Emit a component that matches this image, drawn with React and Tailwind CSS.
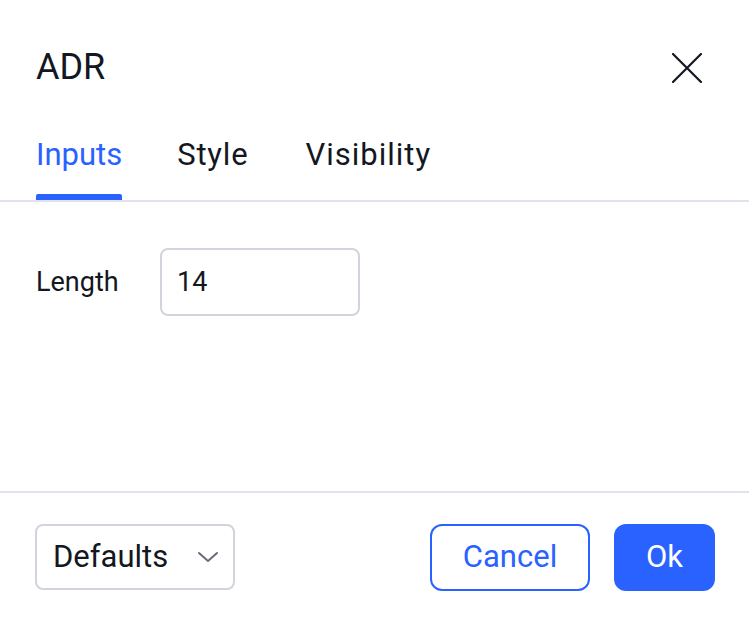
import React from "react";

export default function App() {
  return (
    <div
      className="w-[749px] h-[620px] bg-white text-[#131722] flex flex-col"
      style={{ fontFamily: "Roboto, 'Noto Sans', sans-serif" }}
    >
      <div className="flex items-center justify-between pl-9 pr-[47px] pt-[46px] h-[89px]">
        <h1 className="text-[36px] leading-[43px]">ADR</h1>
        <button className="w-[30px] h-[30px] text-[#131722]">
          <svg viewBox="0 0 30 30" width="30" height="30" fill="none" stroke="currentColor" strokeWidth="2.2" strokeLinecap="round">
            <path d="M1 1 L29 29 M29 1 L1 29" />
          </svg>
        </button>
      </div>

      <div className="flex pl-9 pt-[47px] border-b-2 border-[#e0e3eb]">
        <Tab label="Inputs" active className="mr-[55px]" />
        <Tab label="Style" className="mr-[57px] tracking-[0.8px]" />
        <Tab label="Visibility" className="tracking-[1px]" />
      </div>

      <div className="flex-1 flex flex-col px-9 pt-[46px]">
        <div className="flex items-center">
          <span className="w-[124px] text-[27px]">Length</span>
          <div className="w-[200px] h-[68px] border-2 border-[#d1d4dc] rounded-[8px] flex items-center px-[15px] text-[27px]">
            14
          </div>
        </div>
      </div>

      <div className="border-t-2 border-[#e0e3eb] h-[129px] flex items-start justify-between pl-[35px] pr-[34px] pt-[31px]">
        <div className="w-[200px] h-[66px] border-2 border-[#d1d4dc] rounded-[8px] flex items-center justify-between pl-[16px] pr-[14px]">
          <span className="text-[31px]">Defaults</span>
          <svg viewBox="0 0 22 12" width="22" height="12" fill="none" stroke="#6a6d78" strokeWidth="2" strokeLinecap="round" strokeLinejoin="round">
            <path d="M2 2 L11 10 L20 2" />
          </svg>
        </div>
        <div className="flex gap-[24px]">
          <button className="w-[160px] h-[67px] border-2 border-[#2962ff] rounded-[12px] text-[#2962ff] text-[31px]">
            Cancel
          </button>
          <button className="w-[101px] h-[67px] bg-[#2962ff] rounded-[12px] text-white text-[31px]">
            Ok
          </button>
        </div>
      </div>
    </div>
  );
}

function Tab({ label, active, className = "" }) {
  return (
    <div className={"flex flex-col " + className}>
      <span className={"text-[31px] leading-[37px] " + (active ? "text-[#2962ff]" : "text-[#131722]")}>
        {label}
      </span>
      <div className={"h-[6px] mt-[21px] rounded-t-[2px] " + (active ? "bg-[#2962ff]" : "bg-transparent")} />
    </div>
  );
}
